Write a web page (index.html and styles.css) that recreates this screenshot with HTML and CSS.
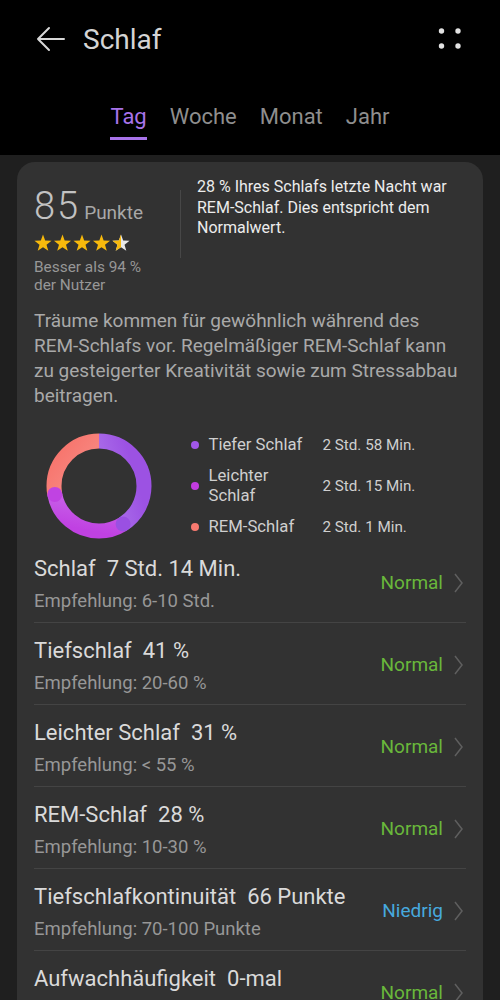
FILE: index.html
```html
<!DOCTYPE html>
<html lang="de">
<head>
  <meta charset="UTF-8">
  <title>Schlaf</title>
  <link rel="stylesheet" href="styles.css">
</head>
<body>

<div class="header">
  <div class="topbar">
    <svg class="back" width="30" height="26" viewBox="0 0 30 26">
      <path d="M29 13H3 M14 2L3 13L14 24" fill="none" stroke="#d8d8d8" stroke-width="2" stroke-linecap="round" stroke-linejoin="round"/>
    </svg>
    <h1>Schlaf</h1>
    <svg class="more" width="24" height="22" viewBox="0 0 24 22">
      <circle cx="3.5" cy="3" r="2.7" fill="#e2e2e2"/>
      <circle cx="20" cy="3" r="2.7" fill="#e2e2e2"/>
      <circle cx="3.5" cy="18" r="2.7" fill="#e2e2e2"/>
      <circle cx="20" cy="18" r="2.7" fill="#e2e2e2"/>
    </svg>
  </div>
  <div class="tabs">
    <span class="tab active">Tag</span>
    <span class="tab">Woche</span>
    <span class="tab">Monat</span>
    <span class="tab">Jahr</span>
  </div>
</div>

<div class="content">
  <div class="card">
    <div class="summary">
      <div class="score">
        <div class="points"><span class="num">85</span><span class="unit">Punkte</span></div>
        <svg class="stars" width="98" height="18" viewBox="0 0 98 18">
          <defs>
            <polygon id="star" points="9,0.5 11.17,6.51 17.56,6.72 12.52,10.64 14.29,16.78 9,13.2 3.71,16.78 5.48,10.64 0.44,6.72 6.83,6.51"/>
            <clipPath id="halfClip"><rect x="0" y="0" width="9" height="18"/></clipPath>
          </defs>
          <use href="#star" x="0" fill="#f7b90c"/>
          <use href="#star" x="19.5" fill="#f7b90c"/>
          <use href="#star" x="39" fill="#f7b90c"/>
          <use href="#star" x="58.5" fill="#f7b90c"/>
          <g transform="translate(78 0)">
            <use href="#star" fill="#e8e8e8"/>
            <use href="#star" fill="#f7b90c" clip-path="url(#halfClip)"/>
          </g>
        </svg>
        <div class="rank">Besser als 94 %<br>der Nutzer</div>
      </div>
      <div class="divider"></div>
      <div class="verdict">28 % Ihres Schlafs letzte Nacht war<br>REM-Schlaf. Dies entspricht dem<br>Normalwert.</div>
    </div>

    <p class="info">Träume kommen für gewöhnlich während des<br>REM-Schlafs vor. Regelmäßiger REM-Schlaf kann<br>zu gesteigerter Kreativität sowie zum Stressabbau<br>beitragen.</p>

    <div class="chart">
      <svg class="donut" width="110" height="110" viewBox="0 0 110 110">
        <defs>
          <linearGradient id="gDeep" x1="0" y1="0" x2="0.3" y2="1">
            <stop offset="0" stop-color="#c6a2f6"/>
            <stop offset="1" stop-color="#9c52e3"/>
          </linearGradient>
          <linearGradient id="gLight" x1="1" y1="0.6" x2="0" y2="0.4">
            <stop offset="0" stop-color="#d6a2f4"/>
            <stop offset="1" stop-color="#c041e2"/>
          </linearGradient>
          <linearGradient id="gRem" x1="0" y1="1" x2="0.8" y2="0">
            <stop offset="0" stop-color="#f8b3b0"/>
            <stop offset="1" stop-color="#f7766e"/>
          </linearGradient>
        </defs>
        <!-- r=45, circumference 282.7 -->
        <g transform="rotate(-90 55 55)" fill="none" stroke-width="15">
          <circle cx="55" cy="55" r="45" stroke="url(#gRem)" stroke-dasharray="79.2 300" stroke-dashoffset="-203.5"/>
          <circle cx="55" cy="55" r="45" stroke="url(#gLight)" stroke-dasharray="87.8 300" stroke-dashoffset="-115.9"/>
          <circle cx="55" cy="55" r="45" stroke="url(#gDeep)" stroke-dasharray="116 300" stroke-dashoffset="0"/>
        </g>
        <circle cx="10.8" cy="63.4" r="7.5" fill="#c043e2"/>
        <circle cx="79.1" cy="93" r="7.5" fill="#9a50e2"/>
      </svg>
      <div class="legend">
        <div class="legend-row"><span class="dot deep"></span><span class="label">Tiefer Schlaf</span><span class="value">2 Std. 58 Min.</span></div>
        <div class="legend-row"><span class="dot light"></span><span class="label">Leichter<br>Schlaf</span><span class="value">2 Std. 15 Min.</span></div>
        <div class="legend-row"><span class="dot rem"></span><span class="label">REM-Schlaf</span><span class="value">2 Std. 1 Min.</span></div>
      </div>
    </div>

    <div class="metrics">
      <div class="metric">
        <div class="metric-text">
          <div class="metric-title">Schlaf<span class="val">7 Std. 14 Min.</span></div>
          <div class="metric-sub">Empfehlung: 6-10 Std.</div>
        </div>
        <span class="status ok">Normal</span>
        <svg class="chev" width="9" height="20" viewBox="0 0 9 20"><polyline points="1,1 8,10 1,19" fill="none" stroke="#5f5f5f" stroke-width="1.5"/></svg>
      </div>
      <div class="metric">
        <div class="metric-text">
          <div class="metric-title">Tiefschlaf<span class="val">41 %</span></div>
          <div class="metric-sub">Empfehlung: 20-60 %</div>
        </div>
        <span class="status ok">Normal</span>
        <svg class="chev" width="9" height="20" viewBox="0 0 9 20"><polyline points="1,1 8,10 1,19" fill="none" stroke="#5f5f5f" stroke-width="1.5"/></svg>
      </div>
      <div class="metric">
        <div class="metric-text">
          <div class="metric-title">Leichter Schlaf<span class="val">31 %</span></div>
          <div class="metric-sub">Empfehlung: &lt; 55 %</div>
        </div>
        <span class="status ok">Normal</span>
        <svg class="chev" width="9" height="20" viewBox="0 0 9 20"><polyline points="1,1 8,10 1,19" fill="none" stroke="#5f5f5f" stroke-width="1.5"/></svg>
      </div>
      <div class="metric">
        <div class="metric-text">
          <div class="metric-title">REM-Schlaf<span class="val">28 %</span></div>
          <div class="metric-sub">Empfehlung: 10-30 %</div>
        </div>
        <span class="status ok">Normal</span>
        <svg class="chev" width="9" height="20" viewBox="0 0 9 20"><polyline points="1,1 8,10 1,19" fill="none" stroke="#5f5f5f" stroke-width="1.5"/></svg>
      </div>
      <div class="metric">
        <div class="metric-text">
          <div class="metric-title">Tiefschlafkontinuität<span class="val">66 Punkte</span></div>
          <div class="metric-sub">Empfehlung: 70-100 Punkte</div>
        </div>
        <span class="status low">Niedrig</span>
        <svg class="chev" width="9" height="20" viewBox="0 0 9 20"><polyline points="1,1 8,10 1,19" fill="none" stroke="#5f5f5f" stroke-width="1.5"/></svg>
      </div>
      <div class="metric">
        <div class="metric-text">
          <div class="metric-title">Aufwachhäufigkeit<span class="val">0-mal</span></div>
          <div class="metric-sub">Empfehlung: 0-2 Mal</div>
        </div>
        <span class="status ok">Normal</span>
        <svg class="chev" width="9" height="20" viewBox="0 0 9 20"><polyline points="1,1 8,10 1,19" fill="none" stroke="#5f5f5f" stroke-width="1.5"/></svg>
      </div>
    </div>
  </div>
</div>

</body>
</html>
```

FILE: styles.css
```css
body { margin: 0; background: #1f1f1f; font-family: Roboto, "Liberation Sans", sans-serif; color: #ddd; overflow: hidden; }

.header { background: #000; height: 155px; }
.topbar { display: flex; align-items: center; height: 80px; padding: 0 38px 0 35px; }
.topbar h1 { margin: 0 0 0 18px; font-size: 28px; font-weight: 400; color: #d4d4d4; flex: 1; line-height: 32px; }
.back { margin-top: -2px; }
.more { margin-top: -2px; }

.tabs { display: flex; justify-content: center; gap: 23px; padding-top: 24px; }
.tab { font-size: 22px; color: #8e8e8e; padding-bottom: 7px; border-bottom: 3px solid transparent; line-height: 26px; }
.tab.active { color: #a873ea; border-bottom-color: #a873ea; }

.content { padding: 7px 17px 0; }
.card { background: #323232; border-radius: 18px; padding: 15px 17px 0; }

.summary { display: flex; align-items: flex-start; }
.score { width: 146px; flex-shrink: 0; padding-top: 9px; }
.points { display: flex; align-items: baseline; height: 40px; }
.num { font-size: 38px; font-weight: 300; color: #c2c2c2; line-height: 40px; letter-spacing: 2px; }
.unit { font-size: 19px; color: #a8a8a8; margin-left: 4px; line-height: 20px; }
.stars { display: block; margin-top: 8px; }
.rank { font-size: 15.4px; color: #979797; line-height: 18px; margin-top: 6px; }
.divider { width: 1px; height: 68px; background: #474747; margin-top: 13px; flex-shrink: 0; }
.verdict { padding-left: 16px; font-size: 16px; line-height: 20.5px; color: #ececec; white-space: nowrap; }

.info { margin: 14px 0 0; font-size: 19px; line-height: 25px; color: #a9a9a9; white-space: nowrap; }

.chart { display: flex; align-items: center; height: 110px; margin-top: 23px; }
.donut { margin-left: 9.5px; flex-shrink: 0; }
.legend { margin-left: 37px; display: flex; flex-direction: column; }
.legend-row { display: flex; align-items: center; height: 41px; }
.dot { width: 8px; height: 8px; border-radius: 50%; margin-right: 10px; flex-shrink: 0; }
.dot.deep { background: #a257ea; }
.dot.light { background: #c33ce0; }
.dot.rem { background: #f7796f; }
.label { width: 114px; font-size: 16.7px; line-height: 20px; color: #cfcfcf; }
.value { font-size: 15.2px; color: #cfcfcf; white-space: nowrap; }

.metric { display: flex; align-items: flex-start; height: 81px; border-bottom: 1px solid #444; }
.metric:last-child { border-bottom: none; }
.metric-text { flex: 1; padding-top: 15px; white-space: nowrap; }
.metric-title { font-size: 22px; color: #dadada; line-height: 26px; }
.metric-title .val { margin-left: 11px; }
.metric-sub { font-size: 18.5px; color: #979797; line-height: 22px; margin-top: 8px; }
.status { font-size: 19px; line-height: 22px; margin-top: 31px; }
.status.ok { color: #69b83b; }
.status.low { color: #47a9de; }
.chev { margin: 32px 3px 0 11px; flex-shrink: 0; }
```
